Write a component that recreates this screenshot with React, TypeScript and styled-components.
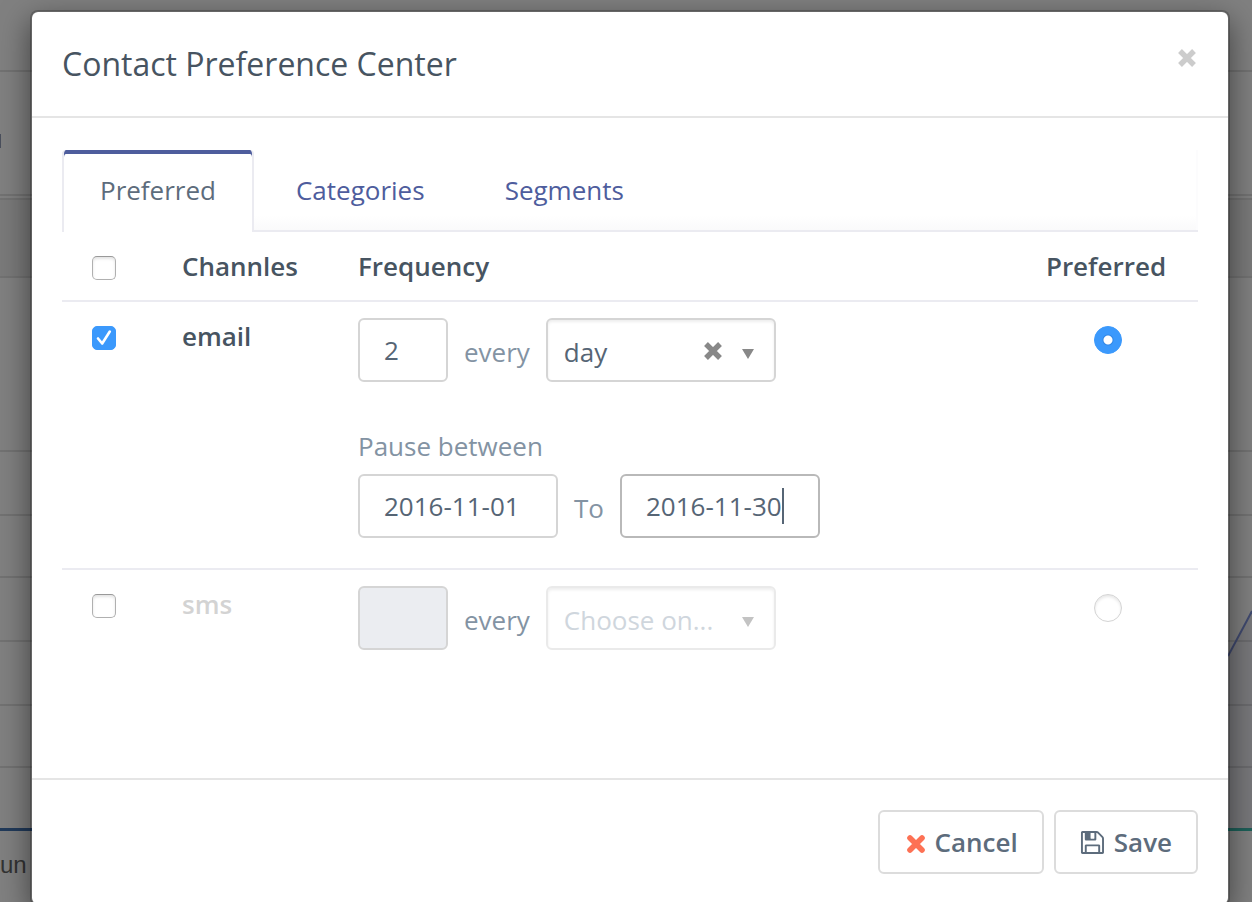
import React from "react";
import styled, { createGlobalStyle, css } from "styled-components";

const GlobalStyle = createGlobalStyle`
  *, *::before, *::after { box-sizing: border-box; }
  body {
    margin: 0;
    background: #808080;
    font-family: "Open Sans", "Noto Sans", sans-serif;
    font-size: 26px;
    line-height: 36px;
    color: #475461;
  }
  button, input, select { font: inherit; color: inherit; }
`;

const Screen = styled.div`
  position: relative;
  height: 100vh;
  overflow: hidden;
`;

const Page = styled.div`
  display: flex;
  flex-direction: column;
  height: 100%;
`;

const Strip = styled.div<{ $h: number; $shade?: boolean }>`
  flex: none;
  height: ${(p) => p.$h}px;
  background: ${(p) => (p.$shade ? "#7a7a7a" : "transparent")};
  border-bottom: 2px solid #727272;
`;

const PageName = styled.span`
  display: block;
  width: 1px;
  height: 14px;
  margin-top: 62px;
  background: #4a4f5c;
`;

const Axis = styled.div`
  flex: none;
  display: grid;
  grid-template-columns: 1fr 1fr;
  height: 63px;
  align-items: end;
`;

const AxisLine = styled.span<{ $color: string }>`
  height: 3px;
  background: ${(p) => p.$color};
`;

const Month = styled.span`
  padding-top: 16px;
  font-family: "Liberation Sans", sans-serif;
  font-size: 24px;
  line-height: 36px;
  color: #333;
`;

const Trend = styled.svg`
  position: absolute;
  top: 600px;
  right: 0;
  width: 24px;
  height: 230px;
`;

const Overlay = styled.div`
  position: absolute;
  inset: 0;
  padding: 10px 22px 0 30px;
`;

const Dialog = styled.section`
  border: 2px solid rgba(0, 0, 0, 0.2);
  border-radius: 8px;
  background: #fff;
  background-clip: padding-box;
  box-shadow: 0 10px 30px rgba(0, 0, 0, 0.5);
`;

const Header = styled.header`
  display: flex;
  justify-content: space-between;
  align-items: flex-start;
  padding: 28px 30px;
  border-bottom: 2px solid #e5e5e5;
`;

const Title = styled.h1`
  margin: 0;
  font-size: 32px;
  font-weight: 400;
  line-height: 48px;
`;

const IconButton = styled.button<{ $color: string }>`
  display: flex;
  padding: 0;
  border: 0;
  background: none;
  color: ${(p) => p.$color};
`;

const Close = styled(IconButton)`
  padding: 8px 1px;
`;

const Body = styled.div`
  padding: 32px 30px 112px;
`;

const Tabs = styled.nav`
  display: flex;
  gap: 4px;
  height: 82px;
  background: linear-gradient(#fff 80%, #f9f9fa);
  box-shadow: inset 0 -2px 0 #ebebf1, inset -2px 0 0 #fcfcfd;
`;

const Tab = styled.button<{ $active?: boolean }>`
  padding: 0 36px 2px;
  border: 0 solid transparent;
  border-width: 0 2px;
  background: none;
  color: #4e5d9d;
  ${(p) =>
    p.$active &&
    css`
      border-color: #ebebf1;
      border-radius: 4px 4px 0 0;
      background: #fff;
      box-shadow: inset 0 4px 0 #4e5d9d;
      color: #5d6c7c;
    `}
`;

const Table = styled.table`
  width: 100%;
  table-layout: fixed;
  border-collapse: collapse;
`;

const Row = styled.tr`
  border-top: 2px solid #ebebf1;
`;

const cell = css`
  padding: 16px;
  text-align: left;
  vertical-align: top;
`;

const Head = styled.th<{ $w?: number; $center?: boolean; $muted?: boolean }>`
  ${cell}
  width: ${(p) => (p.$w ? `${p.$w}px` : "auto")};
  text-align: ${(p) => (p.$center ? "center" : "left")};
  font-weight: 600;
  color: ${(p) => (p.$muted ? "#d3d3d3" : "inherit")};
`;

const Cell = styled.td<{ $center?: boolean }>`
  ${cell}
  text-align: ${(p) => (p.$center ? "center" : "left")};
`;

const CheckCell = styled.td`
  ${cell}
  width: 104px;
  padding-left: 30px;
`;

const Check = styled.input.attrs({ type: "checkbox" })`
  appearance: none;
  display: block;
  width: 24px;
  height: 24px;
  margin: 8px 0 0;
  border: 1px solid #b0b0b0;
  border-top-color: #999;
  border-radius: 5px;
  background: #fff;
  box-shadow: inset 0 2px 3px #e4e4e4;
  &:checked {
    border-color: #3b99fc;
    background: #3b99fc
      url("data:image/svg+xml,%3Csvg xmlns='http://www.w3.org/2000/svg' viewBox='0 0 22 22'%3E%3Cpath d='M5 11.5l4.2 5 7.6-12' fill='none' stroke='white' stroke-width='2.6' stroke-linecap='round' stroke-linejoin='round'/%3E%3C/svg%3E");
    box-shadow: none;
  }
`;

const Radio = styled.input.attrs({ type: "radio" })`
  appearance: none;
  display: inline-block;
  vertical-align: top;
  width: 28px;
  height: 28px;
  margin: 8px 0 0 4px;
  border: 1px solid #d4d4d4;
  border-radius: 50%;
  background: #fff;
  box-shadow: inset 0 2px 3px #e8e8e8;
  &:checked {
    border-color: #3b99fc;
    background: radial-gradient(circle, #fff 4px, #2f86e6 5px, #3b99fc 6px);
    box-shadow: none;
  }
`;

const Line = styled.div`
  display: flex;
  align-items: center;
  gap: 16px;
`;

const Word = styled.span`
  padding-top: 4px;
  color: #8393a3;
`;

const Pause = styled.div`
  display: flex;
  flex-direction: column;
  gap: 10px;
  padding: 46px 0 14px;
`;

const Label = styled.label`
  color: #8393a3;
`;

const Field = styled.input<{ $w: number; $focus?: boolean }>`
  width: ${(p) => p.$w}px;
  height: 64px;
  padding: 0 24px;
  border: 2px solid ${(p) => (p.$focus ? "#b9b9b9" : "#d5d5d5")};
  border-radius: 6px;
  outline: 0;
  background: #fff;
  color: #566575;
  &:disabled {
    background: #ebedf1;
  }
`;

const Holder = styled.div`
  position: relative;
`;

const Caret = styled.i`
  position: absolute;
  top: 14px;
  left: 162px;
  width: 2px;
  height: 36px;
  background: #566575;
`;

const Select = styled.select`
  appearance: none;
  display: block;
  width: 230px;
  height: 64px;
  padding: 4px 60px 0 16px;
  border: 2px solid #d5d5d5;
  border-radius: 6px;
  background: #fff;
  box-shadow: inset 0 2px 3px #eee;
  color: #566575;
  &:disabled {
    opacity: 1;
    border-color: #eaeaea;
    color: #cfd6dd;
  }
`;

const Clear = styled(IconButton)`
  position: absolute;
  top: 23px;
  left: 157px;
`;

const Arrow = styled.i<{ $color: string }>`
  position: absolute;
  top: 31px;
  right: 22px;
  border: 6px solid transparent;
  border-top: 10px solid ${(p) => p.$color};
  border-bottom: 0;
  pointer-events: none;
`;

const Footer = styled.footer`
  display: flex;
  justify-content: flex-end;
  gap: 10px;
  padding: 30px;
  border-top: 2px solid #e5e5e5;
`;

const Button = styled.button`
  display: flex;
  align-items: center;
  gap: 10px;
  height: 64px;
  padding: 0 24px;
  border: 2px solid #dcdcdc;
  border-radius: 6px;
  background: #fff;
  color: #5d6c7c;
  font-weight: 600;
`;

const Cross = () => (
  <svg width="20" height="20" viewBox="0 0 20 20" aria-hidden="true">
    <path d="M3 3l14 14M17 3L3 17" stroke="currentColor" strokeWidth="5.4" />
  </svg>
);

const CancelIcon = () => (
  <svg width="21" height="22" viewBox="0 0 21 22" aria-hidden="true">
    <path d="M6 7l12 12M18 7L6 19" stroke="#fd7154" strokeWidth="5.6" strokeLinecap="round" />
  </svg>
);

const SaveIcon = () => (
  <svg width="24" height="23" viewBox="64 128 1600 1536" fill="currentColor" aria-hidden="true">
    <path d="M512 1536h768v-384h-768v384zm896 0h128v-896q0-14-10-38.5t-20-34.5l-281-281q-10-10-34-20t-39-10v416q0 40-28 68t-68 28h-576q-40 0-68-28t-28-68v-416h-128v1280h128v-416q0-40 28-68t68-28h832q40 0 68 28t28 68v416zm-384-928v-320q0-13-9.5-22.5t-22.5-9.5h-192q-13 0-22.5 9.5t-9.5 22.5v320q0 13 9.5 22.5t22.5 9.5h192q13 0 22.5-9.5t9.5-22.5zm640 32v928q0 40-28 68t-68 28h-1344q-40 0-68-28t-28-68v-1344q0-40 28-68t68-28h928q40 0 88 20t76 48l280 280q28 28 48 76t20 88z" />
  </svg>
);

export default function App() {
  return (
    <Screen>
      <GlobalStyle />
      <Page aria-hidden="true">
        <Strip $h={72} />
        <Strip $h={124}>
          <PageName />
        </Strip>
        <Strip $h={4} />
        <Strip $h={78} $shade />
        {[174, 64, 62, 64, 64, 62].map((h, i) => (
          <Strip key={i} $h={h} />
        ))}
        <Axis>
          <AxisLine $color="#213a5a" />
          <AxisLine $color="#1c6159" />
        </Axis>
        <Month>un</Month>
      </Page>
      <Trend viewBox="0 0 24 230" aria-hidden="true">
        <path d="M0 56L24 11V229H0z" fill="#45465c" fillOpacity="0.14" />
        <path d="M0 56L24 11" stroke="#404a70" strokeWidth="2" />
      </Trend>
      <Overlay>
        <Dialog role="dialog" aria-labelledby="dialog-title">
          <Header>
            <Title id="dialog-title">Contact Preference Center</Title>
            <Close $color="#ccc" aria-label="Close">
              <Cross />
            </Close>
          </Header>
          <Body>
            <Tabs>
              <Tab $active>Preferred</Tab>
              <Tab>Categories</Tab>
              <Tab>Segments</Tab>
            </Tabs>
            <Table>
              <thead>
                <tr>
                  <CheckCell>
                    <Check aria-label="Select all channels" />
                  </CheckCell>
                  <Head scope="col" $w={176}>Channles</Head>
                  <Head scope="col">Frequency</Head>
                  <Head scope="col" $w={184} $center>Preferred</Head>
                </tr>
              </thead>
              <tbody>
                <Row>
                  <CheckCell>
                    <Check defaultChecked aria-label="email" />
                  </CheckCell>
                  <Head scope="row">email</Head>
                  <Cell>
                    <Line>
                      <Field $w={90} defaultValue="2" aria-label="Email count" />
                      <Word>every</Word>
                      <Holder>
                        <Select aria-label="Email period" defaultValue="day">
                          <option>day</option>
                        </Select>
                        <Clear $color="#888" aria-label="Clear period">
                          <Cross />
                        </Clear>
                        <Arrow $color="#888" />
                      </Holder>
                    </Line>
                    <Pause>
                      <Label htmlFor="pause-from">Pause between</Label>
                      <Line>
                        <Field id="pause-from" $w={200} defaultValue="2016-11-01" />
                        <Word as="label" htmlFor="pause-to">To</Word>
                        <Holder>
                          <Field id="pause-to" $w={200} $focus defaultValue="2016-11-30" />
                          <Caret />
                        </Holder>
                      </Line>
                    </Pause>
                  </Cell>
                  <Cell $center>
                    <Radio name="preferred" defaultChecked aria-label="Prefer email" />
                  </Cell>
                </Row>
                <Row>
                  <CheckCell>
                    <Check aria-label="sms" />
                  </CheckCell>
                  <Head scope="row" $muted>sms</Head>
                  <Cell>
                    <Line>
                      <Field $w={90} disabled aria-label="SMS count" />
                      <Word>every</Word>
                      <Holder>
                        <Select disabled aria-label="SMS period">
                          <option>Choose on...</option>
                        </Select>
                        <Arrow $color="#c3c3c3" />
                      </Holder>
                    </Line>
                  </Cell>
                  <Cell $center>
                    <Radio name="preferred" aria-label="Prefer sms" />
                  </Cell>
                </Row>
              </tbody>
            </Table>
          </Body>
          <Footer>
            <Button>
              <CancelIcon />
              Cancel
            </Button>
            <Button>
              <SaveIcon />
              Save
            </Button>
          </Footer>
        </Dialog>
      </Overlay>
    </Screen>
  );
}
